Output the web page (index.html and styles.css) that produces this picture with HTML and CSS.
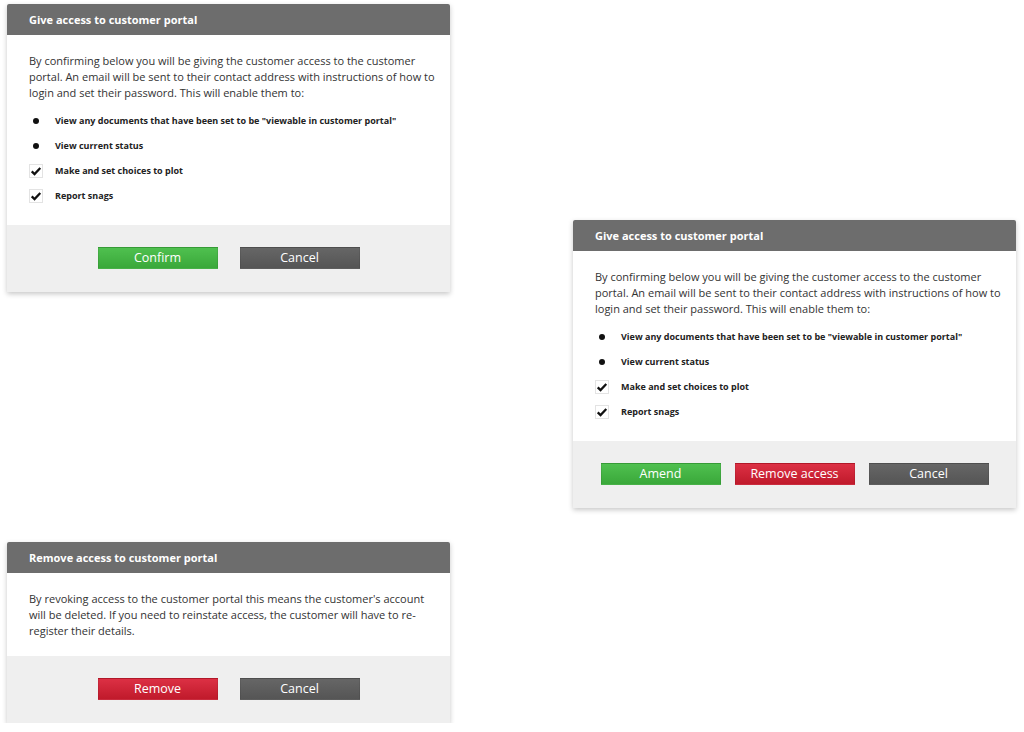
FILE: index.html
```html
<!DOCTYPE html>
<html lang="en">
<head>
    <meta charset="UTF-8">
    <title>Customer portal access</title>
    <link rel="stylesheet" href="styles.css">
</head>
<body>
    <div class="board">
        <div class="column">
            <div class="dialog">
                <div class="dialog-header">Give access to customer portal</div>
                <div class="dialog-body">
                    <p>By confirming below you will be giving the customer access to the customer portal. An email will be sent to their contact address with instructions of how to login and set their password. This will enable them to:</p>
                    <ul class="perms">
                        <li><span class="mark"><span class="dot"></span></span>View any documents that have been set to be "viewable in customer portal"</li>
                        <li><span class="mark"><span class="dot"></span></span>View current status</li>
                        <li><span class="mark"><span class="check"><svg viewBox="0 0 14 14" width="12" height="12"><path d="M2 7.4 L5.3 10.6 L12 3.4" fill="none" stroke="#111" stroke-width="2.6"/></svg></span></span>Make and set choices to plot</li>
                        <li><span class="mark"><span class="check"><svg viewBox="0 0 14 14" width="12" height="12"><path d="M2 7.4 L5.3 10.6 L12 3.4" fill="none" stroke="#111" stroke-width="2.6"/></svg></span></span>Report snags</li>
                    </ul>
                </div>
                <div class="dialog-footer">
                    <button class="btn btn-green">Confirm</button>
                    <button class="btn btn-grey">Cancel</button>
                </div>
            </div>

            <div class="dialog">
                <div class="dialog-header">Remove access to customer portal</div>
                <div class="dialog-body">
                    <p>By revoking access to the customer portal this means the customer's account will be deleted. If you need to reinstate access, the customer will have to re-register their details.</p>
                </div>
                <div class="dialog-footer">
                    <button class="btn btn-red">Remove</button>
                    <button class="btn btn-grey">Cancel</button>
                </div>
            </div>
        </div>

        <div class="column column-right">
            <div class="dialog">
                <div class="dialog-header">Give access to customer portal</div>
                <div class="dialog-body">
                    <p>By confirming below you will be giving the customer access to the customer portal. An email will be sent to their contact address with instructions of how to login and set their password. This will enable them to:</p>
                    <ul class="perms">
                        <li><span class="mark"><span class="dot"></span></span>View any documents that have been set to be "viewable in customer portal"</li>
                        <li><span class="mark"><span class="dot"></span></span>View current status</li>
                        <li><span class="mark"><span class="check"><svg viewBox="0 0 14 14" width="12" height="12"><path d="M2 7.4 L5.3 10.6 L12 3.4" fill="none" stroke="#111" stroke-width="2.6"/></svg></span></span>Make and set choices to plot</li>
                        <li><span class="mark"><span class="check"><svg viewBox="0 0 14 14" width="12" height="12"><path d="M2 7.4 L5.3 10.6 L12 3.4" fill="none" stroke="#111" stroke-width="2.6"/></svg></span></span>Report snags</li>
                    </ul>
                </div>
                <div class="dialog-footer footer-three">
                    <button class="btn btn-green">Amend</button>
                    <button class="btn btn-red">Remove access</button>
                    <button class="btn btn-grey">Cancel</button>
                </div>
            </div>
        </div>
    </div>
</body>
</html>
```

FILE: styles.css
```css
body {
    margin: 0;
    background: #fff;
    font-family: 'Open Sans', sans-serif;
    color: #333;
}

.board {
    display: flex;
    gap: 123px;
    padding: 4px 0 0 7px;
}

.column {
    display: flex;
    flex-direction: column;
    gap: 250px;
    width: 443px;
}

.column-right {
    padding-top: 216px;
}

.dialog {
    background: #fff;
    box-shadow: 0 2px 5px rgba(0, 0, 0, 0.22);
}

.dialog-header {
    background: #6d6d6d;
    color: #fff;
    font-weight: 700;
    font-size: 11px;
    height: 31px;
    line-height: 31px;
    padding: 0 22px;
    border-radius: 2px 2px 0 0;
}

.dialog-body {
    padding: 18px 8px 17px 22px;
    font-size: 11px;
}

.dialog-body p {
    margin: 0;
    line-height: 16px;
}

.perms {
    list-style: none;
    margin: 7px 0 0;
    padding: 0;
}

.perms li {
    display: flex;
    align-items: center;
    height: 25px;
    font-size: 9px;
    font-weight: 700;
    color: #222;
}

.mark {
    width: 26px;
    flex: none;
    display: flex;
    align-items: center;
}

.dot {
    width: 6px;
    height: 6px;
    border-radius: 50%;
    background: #111;
    margin-left: 4px;
}

.check {
    width: 12px;
    height: 12px;
    border: 1px solid #e3e3e3;
    display: flex;
    align-items: center;
    justify-content: center;
}

.dialog-footer {
    background: #efefef;
    padding: 22px 0 23px;
    display: flex;
    justify-content: center;
    gap: 22px;
}

.footer-three {
    gap: 14px;
}

.btn {
    width: 120px;
    height: 22px;
    border: 1px solid rgba(0, 0, 0, 0.08);
    font-family: 'Open Sans', sans-serif;
    font-size: 12.5px;
    line-height: 18px;
    color: #fff;
    padding: 0;
    cursor: pointer;
}

.btn-green {
    background: linear-gradient(#4fc04f, #3aa83a);
}

.btn-red {
    background: linear-gradient(#dc3044, #c01a2b);
}

.btn-grey {
    background: linear-gradient(#666, #555);
}
```
